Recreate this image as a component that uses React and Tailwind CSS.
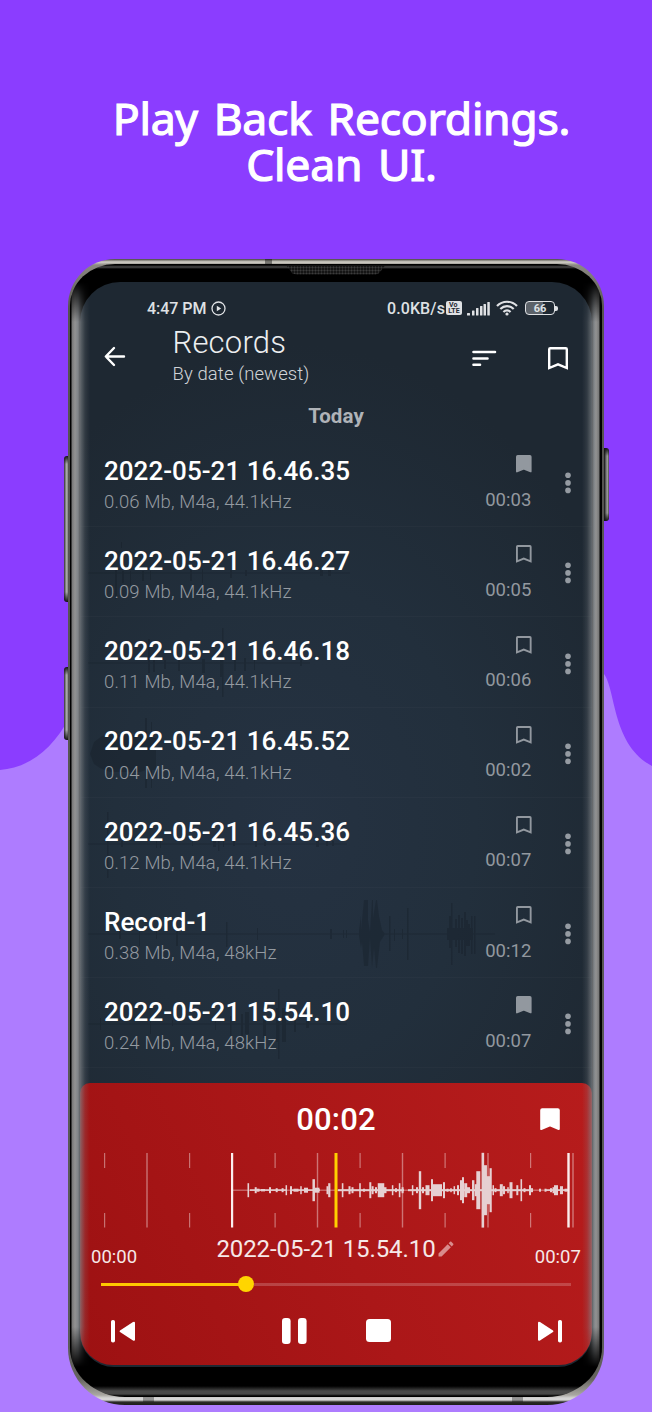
const recordings = [
  { title: "2022-05-21 16.46.35", info: "0.06 Mb, M4a, 44.1kHz", time: "00:03", saved: true },
  { title: "2022-05-21 16.46.27", info: "0.09 Mb, M4a, 44.1kHz", time: "00:05", wave: "M8 45.5H270v1H8zM35 40h2v32h-2zM42 44h2v12h-2zM50 44h1v14h-1zM62 44h2v10h-2zM70 44h1v9h-1zM110 42h2v12h-2zM122 42h1v14h-1zM150 43h2v8h-2zM165 43h2v6h-2zM240 43h3v6h-3zM248 42h3v7h-3zM41 15h1v6h-1z" },
  { title: "2022-05-21 16.46.18", info: "0.11 Mb, M4a, 44.1kHz", time: "00:06", wave: "M8 45.5H230v1H8zM68 22h2v34h-2zM73 43h2v12h-2zM84 43h2v9h-2zM98 42h2v12h-2zM122 42h3v14h-3zM140 30h3v30h-3zM142 11h1.500v69h-1.500zM154 40h2v14h-2zM164 41h2v13h-2zM174 41h1v12h-1zM220 43h2v6h-2z" },
  { title: "2022-05-21 16.45.52", info: "0.04 Mb, M4a, 44.1kHz", time: "00:02", wave: "M10 46L14 34L22 28L30 27H60L66 30H76V62H66L60 64H30L20 60L14 56ZM65 10h2v70h-2zM71 14h1v66h-1z" },
  { title: "2022-05-21 16.45.36", info: "0.12 Mb, M4a, 44.1kHz", time: "00:07", wave: "M8 45.500H267v1H8zM27 14h1.500v66h-1.500zM41 43h2v6h-2zM76 42h1v8h-1zM80 42h1v8h-1zM112 42h1v6h-1zM133 42h3v7h-3zM138 39h1.500v14h-1.500zM143 42h1v7h-1zM153 43h2v5h-2zM175 43h2v6h-2zM184 44h2v4h-2zM236 42h3v7h-3zM246 43h2v5h-2zM252 43h2v5h-2z" },
  { title: "Record-1", info: "0.38 Mb, M4a, 48kHz", time: "00:12", wave: "M8 45.500H415v1H8zM39 42h2v9h-2zM59 40h1v18h-1zM76 41h1v10h-1zM96 41h2v17h-2zM146 34h1.500v25h-1.500zM177 40h1v12h-1zM250 41h2v10h-2zM263 42h1v8h-1zM266 42h1v8h-1zM279 42L281 28V42L284 12H288V32L290 44L292 12H293V30L296 12H297L299 28L302 42L305 46L300 54L297 80H296L294 60L292 80L290 50L288 78H284L282 54L281 60L279 48ZM309 28h1.500v35h-1.500zM314 41h1v12h-1zM322 41h1v10h-1zM327 20h1.500v52h-1.500zM367 40h26v12h-26zM369 28h2v32h-2zM371 15h1.500v62h-1.500zM375 31h2v28h-2zM378 27h2v38h-2zM381 30h2v36h-2zM384 24h2v44h-2zM388 36h2v22h-2zM386 32h2v26h-2zM391 28h1.500v38h-1.500zM394 28h1.500v38h-1.500z" },
  { title: "2022-05-21 15.54.10", info: "0.24 Mb, M4a, 48kHz", time: "00:07", saved: true, wave: "M8 45.500H267v1H8zM20 40h1v12h-1zM70 42h1v14h-1zM92 42h1v6h-1zM135 42h1v10h-1zM150 38h1.500v20h-1.500zM161 36h2v22h-2zM165 34h4v22h-4zM183 40h3v20h-3zM196 30h3v34h-3zM198 11h1.500v70h-1.500zM202 30h4v34h-4zM214 42h2v12h-2zM226 42h3v8h-3z" },
];

// [centre x, half height, width] of every bar, in panel coordinates
const bars = [
  [168.3, 7, 1.6], [175.7, 3, 2], [178, 1.5, 3], [183, 1.2, 4], [190, 3, 2], [196.700, 2, 2], [202.600, 2, 2], [206.300, 5, 1.500], [211, 4, 2], [216, 1.500, 5], [221, 4, 1.500], [226, 2.500, 4], [233.700, 11, 2.500], [237, 2.500, 5], [247.500, 4, 2], [249.300, 7, 2.200],
  [262.600, 7, 1.600], [269.500, 4, 2], [272.500, 3, 2], [280, 7, 1.600], [284, 1.500, 2], [290.300, 8, 2], [292.600, 4, 2], [296, 3, 2], [301, 7, 6.500], [305, 3, 3], [312.600, 5, 1.500], [316, 2, 2], [319.600, 7, 1.600], [322.600, 3, 2], [332.600, 5, 1.500], [337, 3, 2], [340, 19, 2.400], [343, 3, 2], [347.500, 5, 4], [352, 11, 2], [357.500, 6, 9], [364, 8, 2], [367.500, 1.500, 2], [371, 2, 1.500], [374.300, 4, 1.500], [378, 5, 2], [381.500, 10, 3], [383, 13, 2], [385.700, 7, 3], [388.500, 3, 3], [393.200, 10, 2.400], [396, 6, 2.500], [398.500, 3, 2],
  [401.500, 19, 4], [405, 37.400, 2.600], [407, 25, 3], [408.500, 14, 6], [411, 22, 2.200], [413, 5, 1.500], [415.500, 2, 2], [421.300, 6, 3], [424, 4, 2], [428, 3, 1.500], [431, 8, 3], [437.300, 5, 2], [441.300, 11, 1.600], [444.500, 2, 2], [450, 5, 2], [452, 2, 2], [460, 1.500, 2], [465.500, 1.500, 2], [471, 2, 2], [473.500, 3, 2], [476, 5, 4], [481.500, 4, 3], [486, 1.500, 3],
].map(([x, h, w]) => (x > 400 && x < 414 ? [x - 3.2 + (x - 401.5) * 0.3, h, w] : [x, h, w]));

function Bookmark({ filled, className, stroke = 2 }) {
  return (
    <svg viewBox="0 0 20 23" className={className} fill={filled ? "currentColor" : "none"} stroke="currentColor" strokeWidth={stroke} strokeLinejoin={filled ? "round" : "miter"}>
      <path d="M2.200 1.200H17.800Q18.800 1.200 18.800 2.200V21L10 17.300L1.200 21V2.200Q1.200 1.200 2.200 1.200Z" />
    </svg>
  );
}

function StatusBar() {
  return (
    <div className="flex h-[43px] items-center pt-[9px] pr-[34px] pl-[67px] text-[16px] leading-5 font-medium text-[#dfe1e4]">
      <span className="mt-px tracking-[-0.050px]">4:47 PM</span>
      <svg className="ml-[5px] h-[15px] w-[15px]" viewBox="0 0 15 15" fill="none" stroke="currentColor" strokeWidth="1.300">
        <circle cx="7.500" cy="7.500" r="6.500" />
        <path d="M5.800 4.800L10.200 7.500L5.800 10.200Z" fill="currentColor" stroke="none" />
      </svg>
      <span className="mt-px ml-auto tracking-[0.1px]">0.0KB/s</span>
      <span className="ml-[1px] flex h-[14px] w-[16px] flex-col items-center justify-center rounded-[2px] bg-[#dfe1e4] text-[7px] leading-[6px] font-bold text-[#1e2832]">
        <span className="self-start pl-[3px]">Vo</span>
        <span>LTE</span>
      </span>
      <svg className="ml-[5px] h-[15px] w-[23px]" viewBox="0 0 23 15" fill="currentColor">
        <rect x="0" y="12" width="3" height="2.500" rx=".5" />
        <rect x="5" y="9.500" width="2.500" height="5" rx=".5" />
        <rect x="9" y="7" width="2.500" height="7.500" rx=".5" />
        <rect x="13" y="5" width="2.500" height="9.500" rx=".5" />
        <rect x="16.500" y="3" width="2.500" height="11.500" rx=".5" />
        <rect x="20.300" y="1" width="2.500" height="13.500" rx=".5" />
      </svg>
      <svg className="ml-[6px] h-[16px] w-[22px]" viewBox="0 0 22 16" fill="none" stroke="currentColor" strokeWidth="2.200">
        <path d="M1 6C6.500 .3 15.500 .3 21 6" />
        <path d="M4.300 9C8.200 5.200 13.800 5.200 17.700 9" />
        <path d="M7.400 12C9.600 10 12.400 10 14.600 12" />
        <circle cx="11" cy="14" r="1.600" fill="currentColor" stroke="none" />
      </svg>
      <span className="ml-[7px] flex h-[14px] w-[30px] items-center justify-center rounded-[4px] border-[1.500px] border-[#dfe1e4] bg-[#1e2832] bg-linear-to-r from-[#5c6269] from-60% to-[#1e2832] to-60% text-[11px] leading-3 font-bold">
        <span className="mt-px">66</span>
      </span>
      <span className="h-[5px] w-[3px] rounded-r-[2px] bg-[#dfe1e4]" />
    </div>
  );
}

function Header() {
  return (
    <header>
      <div className="flex h-[61px] items-start">
        <svg className="mt-[21px] ml-[24px] h-[21px] w-[22px] text-white" viewBox="0 0 22 21" fill="none" stroke="currentColor" strokeWidth="2.400" strokeLinecap="round" strokeLinejoin="round">
          <path d="M20 10.500H2M10 2L1.800 10.500L10 19" />
        </svg>
        <div className="ml-[46.500px] flex-1 pt-px font-light">
          <h2 className="text-[31px] leading-[34px] tracking-[0.200px] text-[#eceef0]">Records</h2>
          <p className="mt-[3.400px] text-[18.500px] leading-[22px] tracking-[0.100px] text-[#d0d3d7]">By date (newest)</p>
        </div>
        <svg className="mt-[24.500px] h-[17px] w-[25px] text-white" viewBox="0 0 25 17" stroke="currentColor" strokeWidth="2.600" strokeLinecap="round">
          <path d="M1.500 2H23M1.500 8.500H15.500M1.500 14.700H8" />
        </svg>
        <Bookmark className="mt-[22px] mr-[24.500px] ml-[51px] h-[23px] w-[20px] text-white" stroke={2.400} />
      </div>
      <h3 className="mt-[17.500px] h-[33.500px] text-center text-[20.500px] leading-6 font-bold tracking-[0.100px] text-[#afb3b8]">Today</h3>
    </header>
  );
}

function RecordRow({ item }) {
  return (
    <li className="relative flex h-[90.200px] border-b border-white/[0.025] pr-[20.500px] pl-[24px]">
      {item.wave && (
        <svg className="absolute top-0 left-0 h-[90px] w-[512px] text-[#121a22] opacity-30" viewBox="0 0 512 90" fill="currentColor">
          <path d={item.wave} />
        </svg>
      )}
      <div className="relative flex-1 pt-[17.900px]">
        <div className="text-[26px] leading-8 font-medium tracking-[0.030px] text-white">{item.title}</div>
        <div className="mt-[4.200px] text-[18.500px] leading-[22px] font-light tracking-[0.140px] text-[#949aa1]">{item.info}</div>
      </div>
      <div className="relative flex w-[60px] flex-col items-end pt-[18.200px] text-[#92989f]">
        <Bookmark filled={item.saved} className="h-[18px] w-[15.600px]" stroke={2.400} />
        <div className="mt-[15.400px] text-[18.500px] leading-[22px] tracking-[0.050px]">{item.time}</div>
      </div>
      <svg className="mt-[35.200px] ml-[33px] h-[22px] w-[7px] text-[#959ba2]" viewBox="0 0 7 22" fill="currentColor">
        <circle cx="3" cy="3.300" r="2.800" />
        <circle cx="3" cy="10.900" r="2.800" />
        <circle cx="3" cy="18.400" r="2.800" />
      </svg>
    </li>
  );
}

function Waveform() {
  return (
    <svg className="mt-[14.500px] block h-[76px] w-[512px]" viewBox="0 0 512 76">
      <g fill="#fff" opacity=".4">
        {[24.500, 109.500, 195, 280, 365, 450.500].map((x) => (
          <path key={x} d={`M${x - 0.5} 1h1.200v15h-1.200zM${x - 0.5} 61h1.200v14.500h-1.200z`} />
        ))}
        {[67, 237.500, 322.500, 408, 493].map((x) => (
          <rect key={x} x={x - 0.700} y="1" width="1.400" height="74.500" />
        ))}
        <rect x="152" y="37.600" width="336" height="1.200" />
      </g>
      <g fill="#e6d0d2">
        {bars.map(([x, h, w], i) => (
          <rect key={i} x={x - w / 2} y={38.200 - h} width={w} height={h * 2} />
        ))}
        <rect x="170" y="37.300" width="36" height="1.600" />
        <rect x="212" y="37.300" width="28" height="1.600" />
        <rect x="258" y="37.200" width="66" height="2" />
        <rect x="328" y="37.200" width="124" height="2" />
        <rect x="466" y="37.300" width="22" height="1.600" />
      </g>
      <rect x="151" y="1" width="2.200" height="74.500" fill="#fbeeee" />
      <rect x="487.300" y="1" width="2.400" height="74.500" fill="#fbeeee" />
      <rect x="254.500" y="1" width="3" height="74.500" fill="#ffd000" />
    </svg>
  );
}

function Player() {
  return (
    <section className="mt-[14.600px] h-[282.500px] rounded-t-[10px] rounded-b-[33px] bg-linear-[65deg,#9d1112,#ab1718_50%,#b71c1c] pt-[19px] text-white">
      <div className="grid grid-cols-3 items-center">
        <span />
        <span className="text-center text-[31px] leading-9 font-medium tracking-[0.200px]">00:02</span>
        <Bookmark filled className="mr-[32.500px] h-[23px] w-[20px] justify-self-end" />
      </div>
      <Waveform />
      <div className="flex h-[39px] justify-between pt-[7px] pr-[11px] pl-[11px] text-[18.500px] leading-[22px] tracking-[0.030px] text-[#f6e8e8]">
        <span className="mt-[11px]">00:00</span>
        <span className="flex items-center self-start text-[24px] leading-7 tracking-[-0.080px]">
          2022-05-21 15.54.10
          <svg className="h-[20px] w-[20px] text-[#d98c8c]" viewBox="0 0 24 24" fill="currentColor">
            <path d="M3 17.250V21h3.750L17.810 9.940l-3.750-3.750L3 17.250zM20.710 7.040c.39-.39.39-1.020 0-1.410l-2.340-2.340c-.39-.39-1.020-.39-1.410 0l-1.830 1.830 3.750 3.750 1.830-1.830z" />
          </svg>
        </span>
        <span className="mt-[11px]">00:07</span>
      </div>
      <div className="mx-[21px] mt-[9px] flex h-4 items-center">
        <div className="h-[3px] w-[140px] bg-[#ffc800]" />
        <div className="-ml-[3px] h-4 w-4 rounded-full bg-[#ffd500]" />
        <div className="h-[3px] flex-1 bg-white/20" />
      </div>
      <div className="mt-[24.500px] flex items-center pr-[29px] pl-[30px]">
        <svg className="h-[24px] w-[26px]" viewBox="0 0 26 24" fill="currentColor">
          <rect x="1" y="1" width="4" height="22.500" rx="1.800" />
          <path d="M23 3L10 11.500Q9 12.200 10 13L23 21.500Q25 22.300 25 20.500V4Q25 2.200 23 3Z" />
        </svg>
        <svg className="ml-[145px] h-[28px] w-[26px]" viewBox="0 0 26 28" fill="currentColor">
          <rect x="1" y="1" width="8.600" height="26" rx="3.200" />
          <rect x="17" y="1" width="8.600" height="26" rx="3.200" />
        </svg>
        <span className="ml-[59px] h-[23px] w-[24.500px] rounded-[3.500px] bg-white" />
        <svg className="ml-auto h-[24px] w-[26px] -scale-x-100" viewBox="0 0 26 24" fill="currentColor">
          <rect x="1" y="1" width="4" height="22.500" rx="1.800" />
          <path d="M23 3L10 11.500Q9 12.200 10 13L23 21.500Q25 22.300 25 20.500V4Q25 2.200 23 3Z" />
        </svg>
      </div>
    </section>
  );
}

function Phone() {
  return (
    <div className="relative ml-[67.500px] w-[536.500px]">
      <span className="absolute top-[197px] -left-[3.500px] h-[146px] w-[6px] rounded-l-[3px] bg-[linear-gradient(180deg,#111,transparent_8px,transparent_calc(100%-10px),#111),linear-gradient(90deg,#333,#aaa_40%,#555)]" />
      <span className="absolute top-[408px] -left-[3.500px] h-[73px] w-[6px] rounded-l-[3px] bg-[linear-gradient(180deg,#111,transparent_8px,transparent_calc(100%-10px),#111),linear-gradient(90deg,#333,#aaa_40%,#555)]" />
      <span className="absolute top-[189px] -right-[5px] h-[73px] w-[7px] rounded-r-[3px] bg-[linear-gradient(180deg,#111,transparent_8px,transparent_calc(100%-8px),#111),linear-gradient(90deg,#111_30%,#777_60%,#999_80%,#444)]" />
      <div className="relative h-[1146px] overflow-hidden rounded-[47px_47px_57px_57px] bg-linear-[180deg,#3f3e3a_0px,#77756f_1px,#d5d2ca_3px,#8b8982_6px,#55534f_50px,#5a5a5a_1080px,#66645f_1120px,#a9a7a2_1136px,#d5d5d5_1139px,#d5d5d5_1141px,#2b2b28_1143px,#1c1c1a_1146px] px-[2px] pt-[5px] pb-[8px]">
        <span className="absolute top-0 left-[197px] h-[6px] w-[7px] bg-black/40" />
        <span className="absolute bottom-[3px] left-[75px] h-[6px] w-[11px] bg-black/30" />
        <span className="absolute right-[81px] bottom-[3px] h-[6px] w-[11px] bg-black/30" />
        <div className="relative h-[1133px] overflow-hidden rounded-[45px_45px_55px_55px/42px_42px_50px_50px] bg-linear-[180deg,#000_1px,#4a4a4a_3px,#000_5px,#000_1122px,#484848_1127px,#484848_1130px,#000_1132px] px-[10.500px] pt-[18px]">
          <span className="absolute top-[1.500px] left-[217px] h-[9px] w-[99px] bg-[radial-gradient(#3c3c3c_35%,#151515_60%)] bg-[length:3px_3px] [clip-path:polygon(0_0,100%_0,93%_90%,90%_100%,10%_100%,6%_90%)]" />
          <div className="h-[1085px] w-[512px] overflow-hidden rounded-t-[40px] rounded-b-[34px] bg-[#1e2832] bg-[radial-gradient(ellipse_360px_480px_at_42%_50%,#253242,#222f3c_50%,#1e2832)]">
            <StatusBar />
            <Header />
            <ul>
              {recordings.map((item) => (
                <RecordRow key={item.title} item={item} />
              ))}
            </ul>
            <Player />
          </div>
          <div className="absolute top-[18px] bottom-[30px] left-0 w-[20px] bg-linear-[90deg,#000_1px,#777_2px,#929292_5px,#808488_8px,#80848899_11px,#80848833_15px,transparent] [mask-image:linear-gradient(transparent,black_40px,black_1045px,transparent)]" />
          <div className="absolute top-[18px] right-0 bottom-[30px] w-[20px] bg-linear-[270deg,#000_2px,#777_3px,#929292_6px,#808488_8px,#80848899_11px,#80848833_15px,transparent] [mask-image:linear-gradient(transparent,black_40px,black_1045px,transparent)]" />
        </div>
      </div>
    </div>
  );
}

export default function App() {
  return (
    <main className="relative h-[1412px] w-[652px] overflow-hidden bg-[#8b3dff] font-['Roboto',sans-serif]">
      <svg className="absolute inset-0 h-full w-full" viewBox="0 0 652 1412" fill="#ae7cff">
        <path d="M0 770C26 768 52 752 70 716L300 620L604 674C616 690 612 745 652 766V1412H0Z" />
      </svg>
      <div className="relative">
        <h1 className="flex h-[259px] flex-col items-center pt-[95px] pl-[31px] font-['Noto_Sans',sans-serif] text-[44.500px] leading-[46px] font-normal tracking-[-0.250px] whitespace-nowrap text-white [-webkit-text-stroke:1.2px_white] [stroke-linejoin:round] [word-spacing:4.500px]">
          <span>Play Back Recordings.</span>
          <span>Clean UI.</span>
        </h1>
        <Phone />
      </div>
    </main>
  );
}
